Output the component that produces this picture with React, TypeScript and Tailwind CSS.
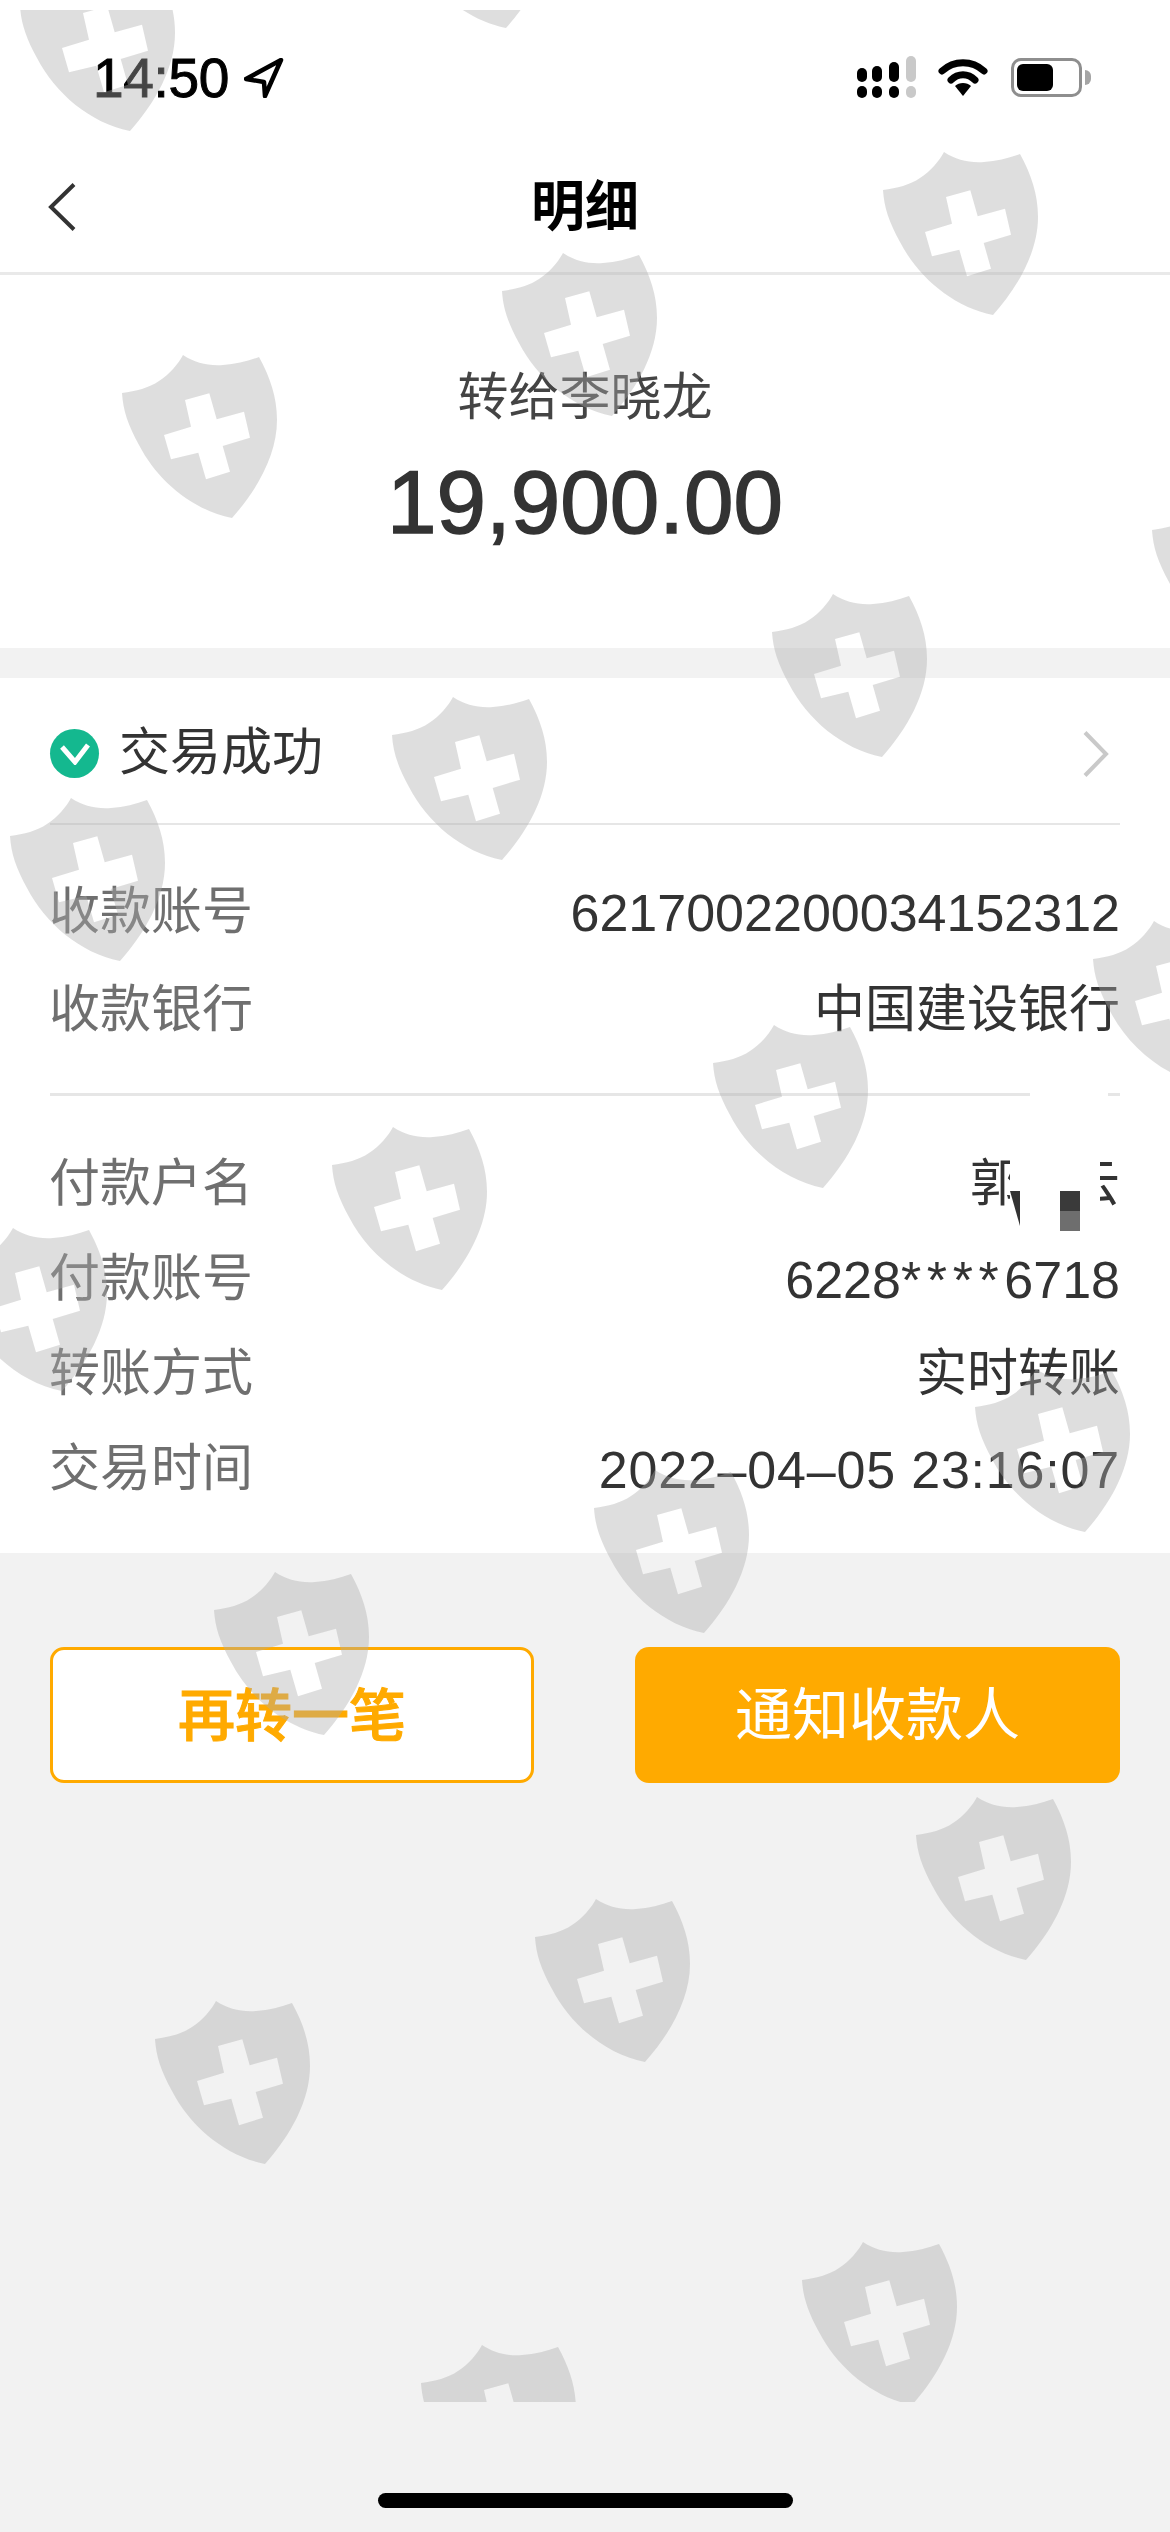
const font = "font-['Liberation_Sans','Noto_Sans_CJK_SC',sans-serif]";

// watermark stamps, top left corner of each shield
const shields = [
  [20, -32], [396, -135],
  [883, 152], [502, 253], [122, 355],
  [1152, 492], [772, 594], [392, 697], [10, 798],
  [1093, 921], [713, 1025], [332, 1127], [-48, 1228],
  [975, 1369], [594, 1470], [214, 1572],
  [916, 1797], [535, 1899], [155, 2001],
  [802, 2242], [421, 2345],
];

function Watermarks() {
  return (
    <svg className="absolute inset-0 pointer-events-none" width="1170" height="2532" viewBox="0 0 1170 2532">
      <defs>
        <clipPath id="stamp-clip">
          <rect x="-60" y="10" width="1300" height="2392" />
        </clipPath>
      </defs>
      <g clipPath="url(#stamp-clip)">
        {shields.map(([x, y]) => (
          <path
            key={`${x}-${y}`}
            transform={`translate(${x} ${y})`}
            fill="#acacac"
            fillOpacity="0.4"
            fillRule="evenodd"
            d="M61 0C73 8 86 11 101 10C114 9 126 6 137 2C148 22 155 42 155 65C155 100 135 135 110 163C70 155 35 125 17 90C6 70 1 55 0 38C14 36 27 33 37 26C48 19 56 9 61 0ZM63 45L87.3 38.3L94.7 64.3L122 56.7L128 82.7L100.7 91L108 116.7L84 124.3L76.3 97.7L49 104.3L42 80L69 71.7Z"
          />
        ))}
      </g>
    </svg>
  );
}

function StatusBar() {
  return (
    <div className="h-[110px] flex items-center justify-between pl-[93px] pr-[79px]">
      <div className="flex items-center gap-[15px] mt-[46px] h-[40px]">
        <span className="text-[55px] leading-none text-black tracking-[-0.3px] [-webkit-text-stroke:1px_#000]">14:50</span>
        <svg width="40" height="40" viewBox="0 0 40 40" fill="none">
          <path d="M37 2L2 21L20 24L21 38Z" stroke="#000" strokeWidth="4.5" strokeLinejoin="round" />
        </svg>
      </div>
      <div className="flex items-center gap-[21px] mt-[44px]">
        <svg width="60" height="42" viewBox="0 0 60 42">
          <rect x="0" y="12" width="10" height="14" rx="5" fill="#000" />
          <rect x="15" y="10" width="10" height="16" rx="5" fill="#000" />
          <rect x="32" y="6" width="10" height="20" rx="5" fill="#000" />
          <rect x="49" y="0" width="10" height="26" rx="5" fill="#c9c9c9" />
          <rect x="0" y="30" width="10" height="12" rx="5" fill="#000" />
          <rect x="15" y="30" width="10" height="12" rx="5" fill="#000" />
          <rect x="32" y="30" width="10" height="12" rx="5" fill="#000" />
          <rect x="49" y="30" width="10" height="12" rx="5" fill="#c9c9c9" />
        </svg>
        <svg width="50" height="38" viewBox="0 0 50 38" fill="none">
          <path d="M4 13C16 2 34 2 46 13" stroke="#000" strokeWidth="7" strokeLinecap="round" />
          <path d="M13 22C20 15 30 15 37 22" stroke="#000" strokeWidth="7" strokeLinecap="round" />
          <path d="M17 28C21 24 29 24 33 28L25 38Z" fill="#000" />
        </svg>
        <div className="flex items-center ml-[2px]">
          <div className="w-[71px] h-[39px] rounded-[10px] border-[3px] border-[#8e8e8e] p-[3px]">
            <div className="w-[36px] h-full rounded-[6px] bg-black" />
          </div>
          <div className="w-[6px] h-[15px] ml-[3px] rounded-r-full bg-[#a5a5a5]" />
        </div>
      </div>
    </div>
  );
}

function Row({ label, children }: { label: string; children: React.ReactNode }) {
  return (
    <div className="h-[95px] flex items-center justify-between">
      <span className="-ml-[1px] text-[51px] text-[#6f6f6f]">{label}</span>
      <span className="relative flex items-center text-[#333]">{children}</span>
    </div>
  );
}

export default function App() {
  return (
    <div className={`${font} relative w-[1170px] h-[2532px] overflow-hidden bg-[#f2f2f2]`}>
      <div className="bg-white">
        <StatusBar />
        <div className="h-[165px] pt-[32px] grid grid-cols-[1fr_auto_1fr] items-center px-[48px] border-b-[3px] border-[#e9e9e9]">
          <svg width="28" height="48" viewBox="0 0 28 48" fill="none">
            <path d="M26 1.5L3 24L26 46.5" stroke="#333" strokeWidth="4" />
          </svg>
          <h1 className="text-[54px] leading-none font-bold text-black">明细</h1>
          <div />
        </div>
        <div className="h-[373px] flex flex-col items-center pt-[93px]">
          <p className="text-[51px] leading-[60px] text-[#444]">转给李晓龙</p>
          <p className="mt-[24px] text-[89px] leading-[100px] text-[#333] [-webkit-text-stroke:1.5px_#333]">19,900.00</p>
        </div>
      </div>

      <div className="mt-[30px] h-[875px] bg-white px-[50px]">
        <div className="h-[147px] pt-[6px] flex items-center border-b-[2px] border-[#e6e6e6]">
          <span className="w-[49px] h-[49px] rounded-full bg-[#14b88f] flex items-center justify-center">
            <svg width="30" height="22" viewBox="0 0 30 22" fill="none">
              <path d="M2 4L15 19L28 2" stroke="#fff" strokeWidth="5" />
            </svg>
          </span>
          <span className="ml-[20px] text-[51px] text-[#333]">交易成功</span>
          <svg className="ml-auto mr-[11px]" width="26" height="46" viewBox="0 0 26 46" fill="none">
            <path d="M2 1.5L23 23L2 44.5" stroke="#c9c9c9" strokeWidth="4" />
          </svg>
        </div>

        <div className="pt-[40px] pb-[38px] border-b-[3px] border-[#e6e6e6] relative">
          <Row label="收款账号"><span className="text-[52px]">6217002200034152312</span></Row>
          <div className="pt-[3px] -mb-[3px]">
            <Row label="收款银行"><span className="text-[51px]">中国建设银行</span></Row>
          </div>
          <div className="absolute right-[12px] -bottom-[3px] w-[78px] h-[3px] bg-white" />
        </div>

        <div className="pt-[41px]">
          <Row label="付款户名">
            <span className="text-[51px] flex">
              郭<span className="w-[48px]" />云
            </span>
            <svg className="absolute right-[20px] top-0" width="90" height="95" viewBox="0 0 90 95">
              <rect width="90" height="95" fill="#fff" />
              <path d="M0 45L10 45L10 80Z" fill="#333" />
              <rect x="50" y="45" width="20" height="20" fill="#3a3a3a" />
              <rect x="50" y="65" width="20" height="20" fill="#6e6e6e" />
            </svg>
          </Row>
          <Row label="付款账号">
            <span className="text-[52px]">
              6228<span className="tracking-[5.6px]">****</span>6718
            </span>
          </Row>
          <Row label="转账方式"><span className="text-[51px]">实时转账</span></Row>
          <Row label="交易时间"><span className="text-[52px] tracking-[0.8px]">2022–04–05 23:16:07</span></Row>
        </div>
      </div>

      <div className="mt-[94px] flex justify-between px-[50px]">
        <button className="w-[484px] h-[136px] pt-[4px] rounded-[14px] border-[3px] border-[#ffaa00] bg-white text-[57px] font-medium text-[#ffaa00] [-webkit-text-stroke:1px_#ffaa00]">
          再转一笔
        </button>
        <button className="w-[485px] h-[136px] pt-[2px] rounded-[14px] bg-[#ffaa00] text-[57px] text-white">
          通知收款人
        </button>
      </div>

      <div className="mt-[710px] mx-auto w-[415px] h-[15px] rounded-full bg-black" />

      <Watermarks />
    </div>
  );
}
